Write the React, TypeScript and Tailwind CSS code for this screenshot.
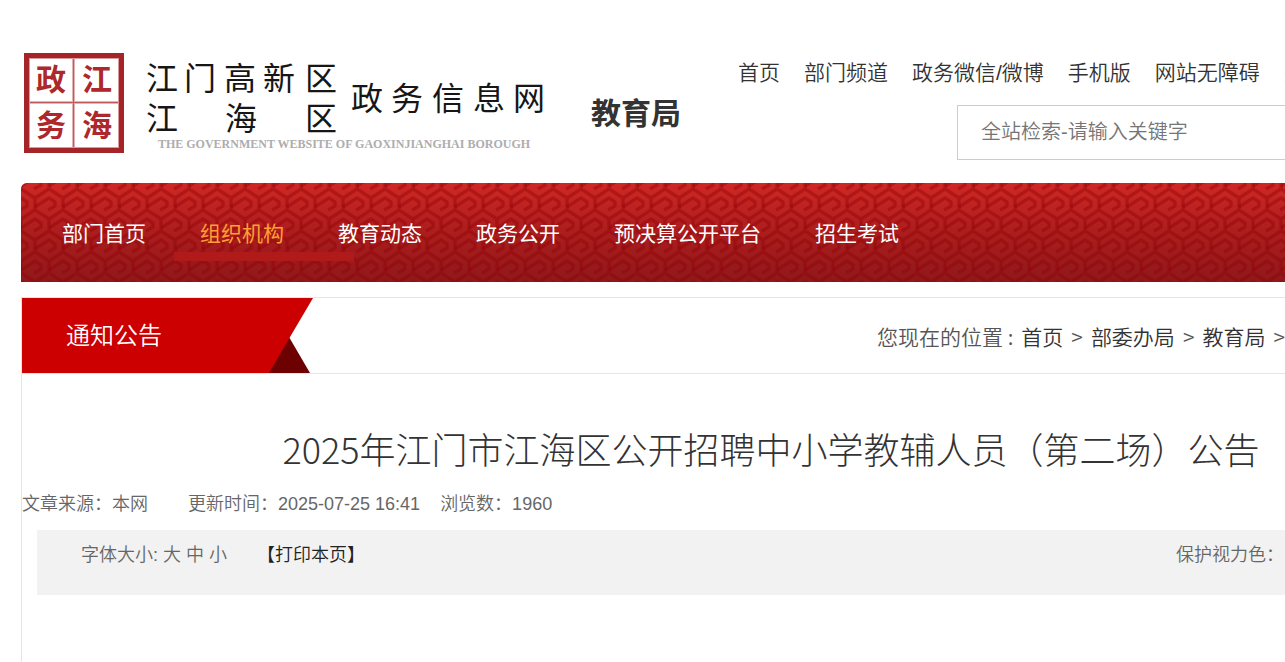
const topLinks = ["首页", "部门频道", "政务微信/微博", "手机版", "网站无障碍", "关怀版"];

const menu = ["部门首页", "组织机构", "教育动态", "政务公开", "预决算公开平台", "招生考试"];

const crumbs = ["首页", "部委办局", "教育局"];

const Logo = () => (
	<svg
		viewBox="0 0 526 104"
		className="h-[104px] w-[526px] shrink-0 font-['Noto_Sans_CJK_SC',sans-serif]"
		role="img"
		aria-label="江门高新区江海区政务信息网"
	>
		{/* Seal */}
		<rect x="5.5" y="4.5" width="95" height="95" fill="#fff" stroke="#a52428" strokeWidth="5" />
		<rect x="8.5" y="7.5" width="89" height="89" fill="none" stroke="#d99a9b" strokeWidth="1" />
		<path d="M52.500 8V96M9 51.500H97" stroke="#e3b3b4" strokeWidth="3" />
		<path d="M52.500 8V96M9 51.500H97" stroke="#bf5b5e" strokeWidth="1" />
		<g fill="#ad272b" fontSize="30" fontWeight="700">
			<text x="15" y="39">政</text>
			<text x="61" y="39">江</text>
			<text x="15" y="85">务</text>
			<text x="61" y="85">海</text>
		</g>

		{/* Site name */}
		<g fill="#161616" fontSize="32" fontWeight="400">
			<text x="125 163 203 242 284" y="39">江门高新区</text>
			<text x="125 204 284" y="79">江海区</text>
			<text x="330 370 411 452 492" y="59">政务信息网</text>
		</g>
		<text
			x="323"
			y="97"
			fill="#adadad"
			fontSize="12"
			fontWeight="700"
			textAnchor="middle"
			className="font-['Liberation_Serif',serif]"
		>
			THE GOVERNMENT WEBSITE OF GAOXINJIANGHAI BOROUGH
		</text>
	</svg>
);

const MenuPattern = () => (
	<svg className="absolute inset-0 size-full" aria-hidden="true">
		<defs>
			<pattern id="knot" width="28" height="42" y="-12" patternUnits="userSpaceOnUse">
				<g
					fill="none"
					stroke="#8e0004"
					strokeOpacity="0.4"
					strokeWidth="3.4"
					strokeLinejoin="round"
				>
					<path d="M-3 4L0 6L14 -3L28 6L31 4M0 6V18L14 27L28 18V6M14 27V39L-3 50M14 39L31 50M14 -15V-3" />
					<path d="M0 15L14 6L20 10V14L13 18" />
					<path d="M14 36L28 27L34 31V35L27 39" />
					<path d="M-14 36L0 27L6 31V35L-1 39" />
				</g>
			</pattern>
		</defs>
		<rect width="100%" height="100%" fill="url(#knot)" />
	</svg>
);

const Header = () => (
	<header className="flex h-[183px] pt-[51px]">
		<Logo />
		<h2 className="ml-11 mt-10 shrink-0 text-[30px] font-bold leading-[46px] text-[#333]">
			教育局
		</h2>
		<div className="ml-[57px] flex-1">
			<nav className="flex gap-6 whitespace-nowrap text-[21px] leading-[44px]">
				{topLinks.map((link) => (
					<a key={link} href="#">
						{link}
					</a>
				))}
			</nav>
			<input
				type="text"
				aria-label="全站检索"
				placeholder="全站检索-请输入关键字"
				className="ml-[219px] mt-[10px] h-[55px] w-[440px] border border-[#ccc] px-[23px] text-xl placeholder:text-[#757575]"
			/>
		</div>
	</header>
);

const Menu = () => (
	<nav className="relative h-[99px] overflow-hidden rounded-tl-md bg-linear-to-b from-[#cf2824] via-[#ac1d1d] to-[#8f181a]">
		<MenuPattern />
		<ul className="relative flex gap-[54px] pl-[41px] pt-[30px] text-[21px] font-normal leading-[42px] text-white">
			{menu.map((item, i) => (
				<li key={item} className="relative whitespace-nowrap">
					{i === 1 && (
						<span className="absolute -left-[26px] top-[39px] h-[9px] w-[180px] bg-[#b01a1a]" />
					)}
					<a href="#" className={i === 1 ? "relative text-[#ff9f35]" : "relative"}>
						{item}
					</a>
				</li>
			))}
		</ul>
	</nav>
);

const Location = () => (
	<div className="flex h-[76px] border-b border-[#e5e5e5]">
		<div className="relative w-[291px] shrink-0">
			<svg viewBox="0 0 291 75" className="absolute inset-0 h-[75px] w-[291px]" aria-hidden="true">
				<path d="M267 39L288 75H246Z" fill="#6d0000" />
				<path d="M0 0H291L268 39L247 75H0Z" fill="#c00" />
			</svg>
			<h3 className="relative pl-11 text-2xl leading-[76px] text-white">通知公告</h3>
		</div>
		<div className="ml-[564px] flex-1 whitespace-nowrap font-['Noto_Sans_CJK_SC',sans-serif] text-[21px] leading-[76px] text-[#555]">
			<span className="mr-2">您现在的位置 :</span>
			{crumbs.map((crumb) => (
				<span key={crumb}>
					<a href="#" className="text-[#333]">
						{crumb}
					</a>
					<span className="mx-2">&gt;</span>
				</span>
			))}
		</div>
	</div>
);

const Article = () => (
	<article>
		<h1 className="pt-[47px] text-center font-['Noto_Sans_CJK_SC',sans-serif] text-4xl font-light leading-[54px]">
			2025年江门市江海区公开招聘中小学教辅人员（第二场）公告
		</h1>
		<div className="mt-[14px] flex text-lg leading-[30px] text-[#666]">
			<span>文章来源：本网</span>
			<span className="ml-10">更新时间：2025-07-25 16:41</span>
			<span className="ml-5">浏览数：1960</span>
		</div>
		<div className="mx-[15px] mt-[11px] flex h-[65px] items-start bg-[#f2f2f2] pl-11 text-lg leading-[50px] text-[#666]">
			<div className="flex items-start gap-[5px]">
				<span>字体大小:</span>
				<button type="button">大</button>
				<button type="button">中</button>
				<button type="button">小</button>
			</div>
			<button type="button" className="ml-[30px] text-[#222]">
				【打印本页】
			</button>
			<span className="ml-auto pr-[221px]">保护视力色：</span>
		</div>
	</article>
);

export default function App() {
	return (
		<div className="min-h-screen overflow-hidden bg-white font-['Liberation_Sans','Noto_Sans_CJK_SC',sans-serif] font-[350] text-[#333]">
			<div className="ml-[21px] min-w-[1500px]">
				<Header />
				<Menu />
				<main className="mt-[15px] min-h-[365px] border border-b-0 border-[#e5e5e5]">
					<Location />
					<Article />
				</main>
			</div>
		</div>
	);
}
